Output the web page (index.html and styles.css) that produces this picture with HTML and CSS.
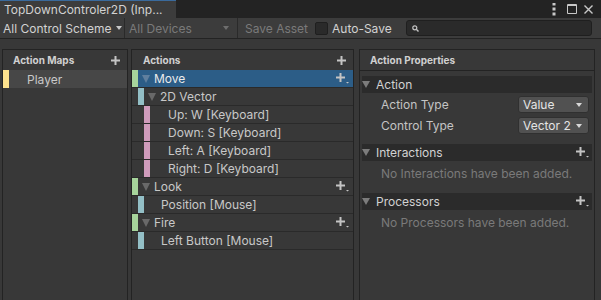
FILE: index.html
```html
<!DOCTYPE html>
<html lang="en">
<head>
	<meta charset="UTF-8">
	<meta name="viewport" content="width=device-width, initial-scale=1.0">
	<title>TopDownControler2D (Input Actions)</title>
	<link rel="stylesheet" href="styles.css">
</head>
<body>
	<div class="tabbar">
		<div class="tab">TopDownControler2D (Inp...</div>
		<div class="window-buttons">
			<svg class="kebab" width="4" height="13" viewBox="0 0 4 13"><rect x="1" y="0" width="2" height="2"/><rect x="1" y="5" width="2" height="2"/><rect x="1" y="10" width="2" height="2"/></svg>
			<svg class="maximize" width="10" height="10" viewBox="0 0 10 10"><path d="M0.5 0.5h9v9h-9z M0.5 1.5h9" fill="none" stroke-width="1"/></svg>
			<svg class="close" width="9" height="9" viewBox="0 0 9 9"><path d="M0.5 0.5l8 8M8.5 0.5l-8 8" fill="none" stroke-width="1.4"/></svg>
		</div>
	</div>

	<div class="toolbar">
		<div class="tb-dropdown scheme">All Control Scheme<span class="arrow"></span></div>
		<div class="tb-dropdown devices disabled">All Devices<span class="arrow"></span></div>
		<div class="tb-button disabled">Save Asset</div>
		<label class="tb-toggle"><span class="checkbox"></span>Auto-Save</label>
		<div class="search">
			<svg width="7" height="7" viewBox="0 0 7 7"><circle cx="2.8" cy="2.8" r="2" fill="none" stroke-width="1.2"/><path d="M4.3 4.3l2.2 2.2" stroke-width="1.4"/></svg>
		</div>
	</div>

	<div class="panes">
		<section class="pane maps-pane">
			<div class="pane-header">Action Maps<svg class="plus" width="9" height="9" viewBox="0 0 9 9"><path d="M4.5 0v9M0 4.5h9" stroke-width="2"/></svg></div>
			<div class="row map-row selected-map"><span class="strip yellow"></span>Player</div>
		</section>

		<section class="pane actions-pane">
			<div class="pane-header">Actions<svg class="plus" width="9" height="9" viewBox="0 0 9 9"><path d="M4.5 0v9M0 4.5h9" stroke-width="2"/></svg></div>

			<div class="row action selected">
				<span class="strip green"></span><span class="fold"></span>Move
				<svg class="plus-drop" width="13" height="11" viewBox="0 0 13 11"><path d="M4.5 0v9M0 4.5h9" stroke-width="2"/><path d="M10 9h3l-1.5 1.6z" stroke="none"/></svg>
			</div>
			<div class="row composite"><span class="strip teal"></span><span class="fold"></span>2D Vector</div>
			<div class="row part"><span class="strip pink"></span>Up: W [Keyboard]</div>
			<div class="row part"><span class="strip pink"></span>Down: S [Keyboard]</div>
			<div class="row part"><span class="strip pink"></span>Left: A [Keyboard]</div>
			<div class="row part"><span class="strip pink"></span>Right: D [Keyboard]</div>

			<div class="row action">
				<span class="strip green"></span><span class="fold"></span>Look
				<svg class="plus-drop" width="13" height="11" viewBox="0 0 13 11"><path d="M4.5 0v9M0 4.5h9" stroke-width="2"/><path d="M10 9h3l-1.5 1.6z" stroke="none"/></svg>
			</div>
			<div class="row binding"><span class="strip teal"></span>Position [Mouse]</div>

			<div class="row action">
				<span class="strip green"></span><span class="fold"></span>Fire
				<svg class="plus-drop" width="13" height="11" viewBox="0 0 13 11"><path d="M4.5 0v9M0 4.5h9" stroke-width="2"/><path d="M10 9h3l-1.5 1.6z" stroke="none"/></svg>
			</div>
			<div class="row binding"><span class="strip teal"></span>Left Button [Mouse]</div>
		</section>

		<section class="pane props-pane">
			<div class="pane-header boxed">Action Properties</div>
			<div class="props-body">
				<div class="foldout"><span class="fold"></span>Action</div>
				<div class="prop-row">
					<span class="prop-label">Action Type</span>
					<div class="dropdown">Value<span class="arrow"></span></div>
				</div>
				<div class="prop-row second">
					<span class="prop-label">Control Type</span>
					<div class="dropdown">Vector 2<span class="arrow"></span></div>
				</div>

				<div class="foldout spaced"><span class="fold"></span>Interactions
					<svg class="plus-drop" width="13" height="11" viewBox="0 0 13 11"><path d="M4.5 0v9M0 4.5h9" stroke-width="2"/><path d="M10 9h3l-1.5 1.6z" stroke="none"/></svg>
				</div>
				<div class="empty-note">No Interactions have been added.</div>

				<div class="foldout spaced"><span class="fold"></span>Processors
					<svg class="plus-drop" width="13" height="11" viewBox="0 0 13 11"><path d="M4.5 0v9M0 4.5h9" stroke-width="2"/><path d="M10 9h3l-1.5 1.6z" stroke="none"/></svg>
				</div>
				<div class="empty-note">No Processors have been added.</div>
			</div>
		</section>
	</div>
</body>
</html>
```

FILE: styles.css
```css
body {
	margin: 0;
	height: 300px;
	overflow: hidden;
	background: #383838;
	color: #c4c4c4;
	font-family: Inter, 'Noto Sans', sans-serif;
	font-size: 12px;
}

svg {
	display: block;
	fill: #c4c4c4;
	stroke: #c4c4c4;
}

/* tab strip */
.tabbar {
	display: flex;
	height: 18px;
	background: #232323;
}

.tab {
	width: 176px;
	box-sizing: border-box;
	padding-left: 4px;
	border-top: 1px solid #3a6a9c;
	background: #3c3c3c;
	color: #d2d2d2;
	line-height: 17px;
}

.window-buttons {
	display: flex;
	align-items: center;
	margin-left: auto;
	padding-right: 8px;
}

.window-buttons svg {
	fill: #c8c8c8;
	stroke: #c8c8c8;
}

.kebab {
	margin-right: 11px;
}

.maximize {
	margin-right: 7px;
}

/* toolbar */
.toolbar {
	display: flex;
	align-items: center;
	height: 20px;
	background: #3c3c3c;
	border-bottom: 1px solid #232323;
}

.tb-dropdown {
	display: flex;
	align-items: center;
	height: 20px;
	box-sizing: border-box;
	border-right: 1px solid #2a2a2a;
	color: #d2d2d2;
}

.tb-dropdown.scheme {
	width: 125px;
	padding-left: 3px;
}

.tb-dropdown.devices {
	width: 113px;
	padding-left: 4px;
}

.tb-dropdown .arrow,
.dropdown .arrow {
	width: 0;
	height: 0;
	margin-left: auto;
	border-left: 3.5px solid transparent;
	border-right: 3.5px solid transparent;
	border-top: 4px solid #c8c8c8;
}

.tb-dropdown.scheme .arrow {
	margin-left: 5px;
}

.tb-dropdown.devices .arrow {
	margin-right: 8px;
	border-top-color: #6e6e6e;
}

.disabled {
	color: #7a7a7a;
}

.tb-button {
	padding: 0 7px;
}

.tb-toggle {
	display: flex;
	align-items: center;
	color: #d2d2d2;
}

.checkbox {
	width: 13px;
	height: 13px;
	margin-right: 4px;
	box-sizing: border-box;
	border: 1px solid #1f1f1f;
	border-radius: 2px;
	background: #2a2a2a;
}

.search {
	display: flex;
	align-items: center;
	width: 186px;
	height: 16px;
	margin-left: 14px;
	box-sizing: border-box;
	padding-left: 5px;
	border: 1px solid #1f1f1f;
	border-radius: 3px;
	background: #2a2a2a;
}

/* panes */
.panes {
	display: flex;
	padding: 10px 0 0 2px;
}

.pane {
	height: 260px;
	box-sizing: border-box;
	border: 1px solid #232323;
	border-bottom: none;
}

.maps-pane {
	width: 126px;
	margin-right: 3px;
}

.actions-pane {
	width: 223px;
	margin-right: 5px;
}

.props-pane {
	width: 236px;
}

.pane-header {
	display: flex;
	align-items: center;
	justify-content: space-between;
	height: 20px;
	padding: 0 7px 0 10px;
	font-size: 10px;
	font-weight: 700;
	color: #d0d0d0;
}

.pane-header.boxed {
	height: 20px;
	border-bottom: 1px solid #232323;
}

.actions-pane .pane-header {
	padding-left: 11px;
}

/* tree rows */
.row {
	display: flex;
	align-items: center;
	height: 17px;
	border-bottom: 1px solid #2a2a2a;
	color: #c8c8c8;
}

.strip {
	align-self: stretch;
	width: 6px;
	flex: none;
}

.yellow { background: #fde28e; }
.green { background: #a6d49b; }
.teal { background: #93bfc6; }
.pink { background: #cf9bbb; }

.map-row {
	border-bottom: none;
	height: 18px;
}

.map-row .strip {
	margin-right: 18px;
}

.selected-map {
	background: #474747;
}

.fold {
	width: 0;
	height: 0;
	flex: none;
	border-left: 4.5px solid transparent;
	border-right: 4.5px solid transparent;
	border-top: 8px solid #696969;
}

.action .fold {
	margin: 0 4px 0 4px;
}

.action.selected {
	background: linear-gradient(90deg, transparent 6px, #2c5d87 6px);
	color: #eaeaea;
}

.action.selected .fold {
	border-top-color: #5f7f9e;
}

.plus-drop {
	margin-left: auto;
	margin-right: 4px;
	flex: none;
}

.composite .strip,
.binding .strip {
	margin-left: 6px;
}

.composite .fold {
	margin: 0 4px 0 4px;
}

.binding .strip {
	margin-right: 17px;
}

.part .strip {
	margin-left: 12px;
	margin-right: 18px;
}

/* properties */
.props-body {
	padding: 5px 2px 0 2px;
}

.foldout {
	display: flex;
	align-items: center;
	height: 17px;
	background: #2b2b2b;
	color: #d2d2d2;
}

.foldout .fold {
	margin-right: 6px;
	border-top-color: #7c7c7c;
	border-left-width: 4px;
	border-right-width: 4px;
	border-top-width: 7px;
}

.foldout .plus-drop {
	margin-right: 3px;
}

.foldout.spaced {
	margin-top: 10px;
}

.prop-row {
	display: flex;
	align-items: center;
	justify-content: space-between;
	height: 17px;
	margin-top: 3px;
	padding: 0 3px 0 19px;
}

.prop-row.second {
	margin-top: 4px;
}

.dropdown {
	display: flex;
	align-items: center;
	width: 71px;
	height: 17px;
	box-sizing: border-box;
	padding: 0 6px 0 4px;
	border: 1px solid #303030;
	border-radius: 3px;
	background: #515151;
	color: #e4e4e4;
}

.dropdown .arrow {
	border-top-color: #d8d8d8;
}

.empty-note {
	height: 18px;
	margin-top: 4px;
	padding-left: 19px;
	line-height: 18px;
	color: #7a7a7a;
}
```
